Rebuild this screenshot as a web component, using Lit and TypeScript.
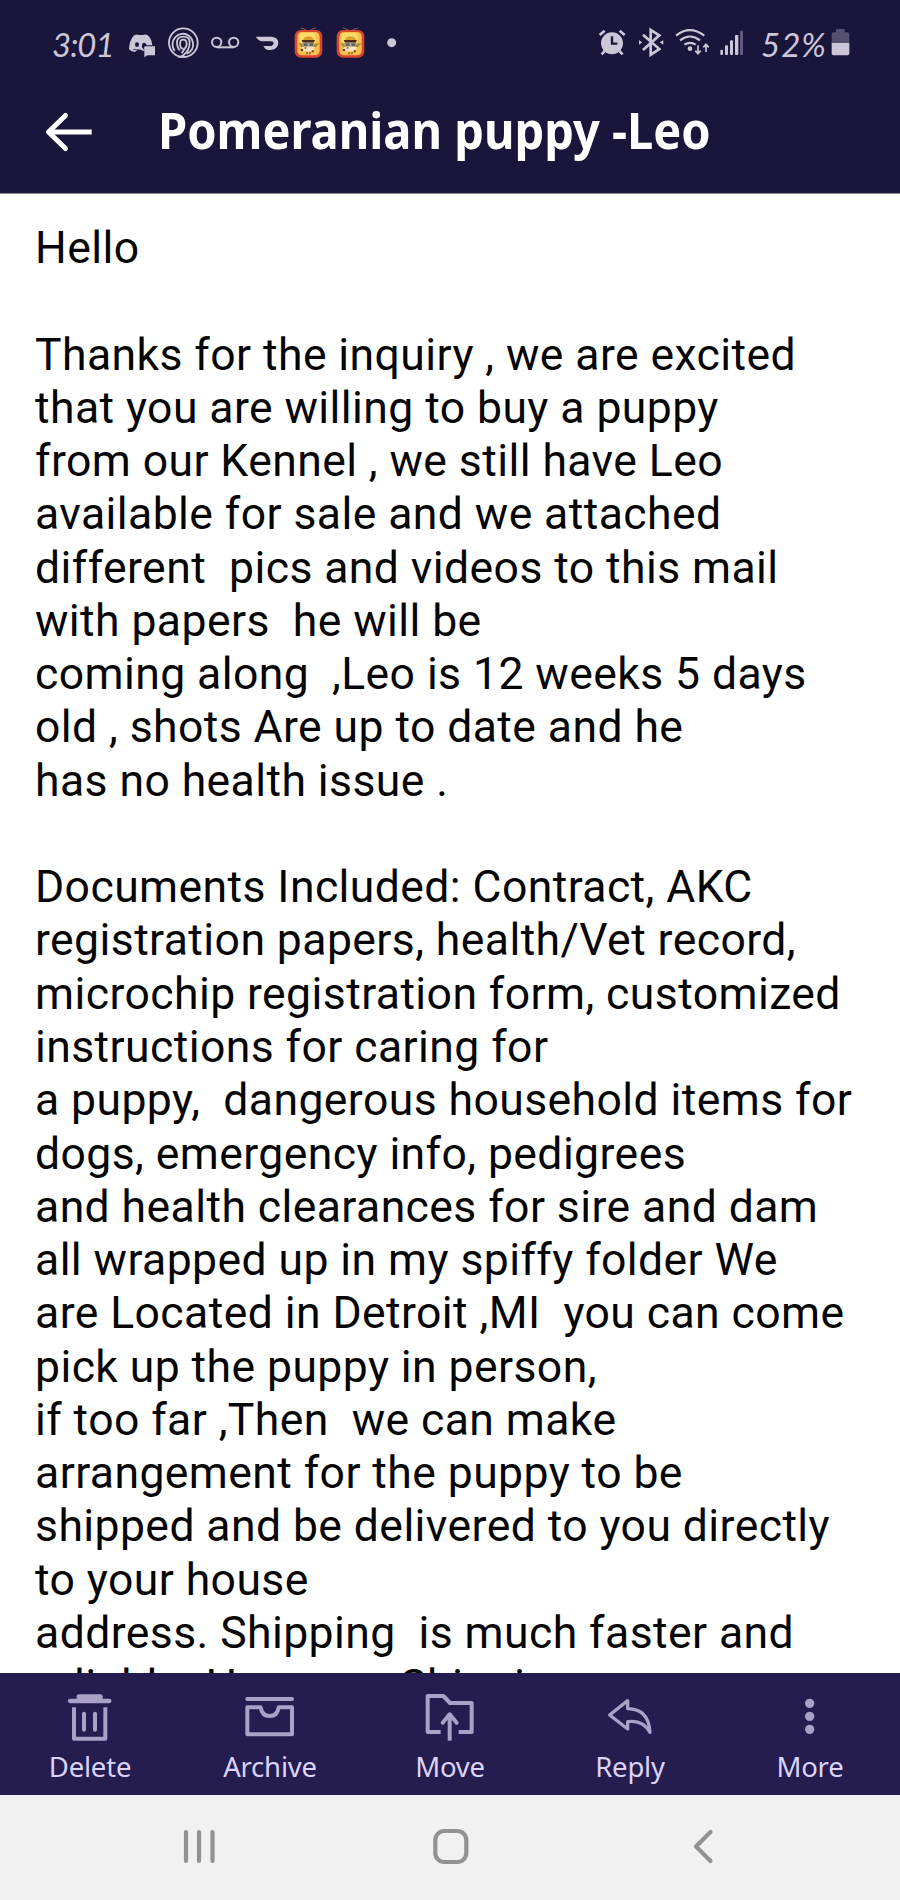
import { LitElement, html, svg, css } from "lit";
import { customElement } from "lit/decorators.js";

const LINES = [
  "Hello", "",
  "Thanks for the inquiry , we are excited",
  "that you are willing to buy a puppy",
  "from our Kennel , we still have Leo",
  "available for sale and we attached",
  "different  pics and videos to this mail",
  "with papers  he will be",
  "coming along  ,Leo is 12 weeks 5 days",
  "old , shots Are up to date and he",
  "has no health issue .", "",
  "Documents Included: Contract, AKC",
  "registration papers, health/Vet record,",
  "microchip registration form, customized",
  "instructions for caring for",
  "a puppy,  dangerous household items for",
  "dogs, emergency info, pedigrees",
  "and health clearances for sire and dam",
  "all wrapped up in my spiffy folder We",
  "are Located in Detroit ,MI  you can come",
  "pick up the puppy in person,",
  "if too far ,Then  we can make",
  "arrangement for the puppy to be",
  "shipped and be delivered to you directly",
  "to your house",
  "address. Shipping  is much faster and",
  "reliable. However, Shipping",
];

// Status glyphs are drawn on a grid of three units per pixel.
const glyph = (x: number, w: number, body: unknown) =>
  html`<svg width=${w / 3} height="40" viewBox="${x} 42 ${w} 120">${body}</svg>`;

const appBadge = svg`
  <path d="M812 54l16 5M858 54l-16 5" stroke="#8b5a58" stroke-width="3"/>
  <rect x="794" y="60" width="83" height="83" rx="19" fill="#d8452f"/>
  <rect x="802" y="66" width="67" height="70" rx="14" fill="#fbc04e"/>
  <rect x="809" y="69" width="48" height="30" rx="10" fill="#ffdc6a"/>
  <path d="M804 99l14 2 4 9-8 2zM868 99l-14 2-4 9 8 2z" fill="#a88a35"/>
  <path d="M818 94q2-15 17-15t18 15z" fill="#d9a32a"/>
  <path d="M815 90h40l-4 8h-32z" fill="#4b2a1c"/>
  <path d="M818 98h34v12h-34z" fill="#b9b09c"/>
  <path d="M821 100h12v8h-12zM838 100h12v8h-12z" fill="#5f666c"/>
  <path d="M815 111h40l-7 13h-26z" fill="#fbe5c4"/>
  <path d="M812 117h7v6h-7zM824 112h5v4h-5zM845 121h6v6h-6zM829 127h4v6h-4zM838 127h4v6h-4z" fill="#7a3a22"/>`;

const ACTIONS = [
  { label: "Delete", icon: svg`<path d="M230 328V319Q230 313 236 313H302Q308 313 308 319V328Z" fill="#a9a1c8" stroke="none"/><path d="M210 333H328" stroke-width="13"/><path d="M222 352V446H316V352" stroke-linecap="butt"/><path d="M252 371V419M285 371V419"/>`, x: 189 },
  { label: "Archive", icon: svg`<path d="M742 327H876"/><path d="M742 352H782Q786 378 809 378T836 352H876V433H742Z"/>`, x: 729 },
  { label: "Move", icon: svg`<path d="M1322 426H1283V318H1330L1350 339H1415V426H1376" stroke-linecap="butt"/><path d="M1349 452V370" stroke-linecap="butt"/><path d="M1328 398L1349 373L1370 398"/>`, x: 1269 },
  { label: "Reply", icon: svg`<path d="M1883 332L1829 375L1883 417V395Q1928 388 1950 427Q1946 357 1883 356Z" stroke-width="10"/>`, x: 1809 },
  { label: "More", icon: svg`<g fill="#a9a1c8" stroke="none"><circle cx="2429" cy="340" r="14"/><circle cx="2429" cy="379" r="14"/><circle cx="2429" cy="418" r="14"/></g>`, x: 2349 },
];

@customElement("app-root")
export class AppRoot extends LitElement {
  static styles = css`
    :host { display: flex; flex-direction: column; width: 900px; height: 1900px; overflow: hidden; background: #fff; }
    svg { display: block; flex: none; overflow: visible; }
    .top { flex: none; height: 194px; background: #1a153b; border-bottom: 1px solid #8f8b9d; box-sizing: border-box; }
    .status { display: flex; height: 64px; padding: 24px 50px 0 52px; box-sizing: border-box; color: #cbc6d8; justify-content: space-between; }
    .group { display: flex; height: 40px; }
    .hand { font: italic 400 33px/40px Lato, sans-serif; white-space: nowrap; }
    .time { width: 77px; letter-spacing: -1px; }
    .pct { width: 70px; letter-spacing: 1px; }
    .bar { display: flex; align-items: center; padding-left: 44px; height: 132px; }
    .bar svg { margin-right: 66px; margin-top: 4px; }
    .title { margin: 0; font: 700 50px/68px "Noto Sans", sans-serif; color: #fff; white-space: nowrap; transform-origin: left; transform: scaleX(.94); }
    .mail { flex: 1; min-height: 0; overflow: hidden; padding: 28px 0 0 35px; }
    .line { height: 53.27px; font: 400 44.5px/53.27px Roboto, sans-serif; color: #050505; white-space: pre; letter-spacing: .42px; }
    .actions { flex: none; display: grid; grid-template-columns: repeat(5, 1fr); height: 122px; background: #251c50; }
    .action { display: flex; flex-direction: column; align-items: center; padding-top: 17px; }
    .label { font: 400 27.5px/34px "Noto Sans", sans-serif; color: #dcd3f8; margin-top: 6px; letter-spacing: -.2px; }
    .nav { flex: none; display: flex; height: 105px; background: #f1f1f1; }
  `;

  render() {
    return html`
      <header class="top">
        <div class="status">
          <div class="group">
            <span class="hand time">3:01</span>
            ${glyph(297, 114, svg`<path d="M311 77Q321 71 326 75H339Q350 71 358 80Q367 93 367 106H343V124L332 119H324L314 126Q302 125 297 118Q298 91 311 77Z" fill="#cbc6d8"/><ellipse cx="321" cy="104" rx="6" ry="7" fill="#1a153b"/><path d="M336 112V105Q337 97 344 98L349 103V108H342V119ZM307 117Q318 124 332 119" fill="#1a153b"/><path d="M346 109H375V136H352L343 142V112Z" fill="#cbc6d8"/>`)}
            ${glyph(411, 132, svg`<g fill="none" stroke="#cbc6d8" stroke-width="5.5"><circle cx="460" cy="98" r="43"/><path d="M434 123A31 32 0 1 1 486 118Q480 128 470 131"/><path d="M450 121Q441 113 441 98Q441 80 460 80T479 98Q479 119 461 135Q453 143 444 139"/><path d="M460 116Q450 116 450 102Q450 89 460 89T470 102Q470 110 464 116L455 130"/></g>`)}
            ${glyph(543, 132, svg`<g fill="none" stroke="#cbc6d8" stroke-width="6"><circle cx="560" cy="97" r="14"/><circle cx="611" cy="97" r="14"/><path d="M560 112H611"/></g>`)}
            ${glyph(675, 117, svg`<path d="M677 80H725Q745 82 745 99Q744 117 723 120H713Q705 118 700 108H724Q731 105 731 99Q730 94 724 94H694Q683 90 677 80Z" fill="#cbc6d8"/>`)}
            ${glyph(792, 126, appBadge)}
            ${glyph(792, 126, appBadge)}
            ${glyph(1044, 60, svg`<circle cx="1085" cy="98" r="13.5" fill="#cbc6d8"/>`)}
          </div>
          <div class="group">
            ${glyph(55, 120, svg`<g fill="none" stroke="#cbc6d8" stroke-width="8"><path d="M60 75L75 62M135 75L120 62"/><path d="M75 123L66 133M119 123L129 133"/></g><circle cx="97" cy="100" r="33" fill="#cbc6d8"/><path d="M97 79V101H113" fill="none" stroke="#1a153b" stroke-width="7"/>`)}
            ${glyph(175, 111, svg`<g fill="none" stroke="#cbc6d8" stroke-width="8"><path d="M190 74L239 117L213 134V60L239 76L190 120"/></g><path d="M178 91L188 97L178 104ZM251 91L240 97L251 104Z" fill="#cbc6d8"/>`)}
            ${glyph(286, 133, svg`<g fill="none" stroke="#cbc6d8" stroke-width="6.5"><path d="M289 77Q330 44 374 77M301 91Q331 68 361 91M314 104Q331 93 348 104"/><path d="M355 106V131M347 122L355 131L363 122M379 126V103M371 112L379 103L387 112" stroke-width="5"/></g><circle cx="331" cy="116" r="7" fill="#cbc6d8"/>`)}
            ${glyph(419, 124, svg`<g fill="#cbc6d8"><rect x="420" y="119" width="8" height="16" rx="3"/><rect x="434" y="106" width="9" height="29" rx="3"/><rect x="449" y="91" width="9" height="44" rx="3"/><rect x="464" y="75" width="10" height="60" rx="3"/></g><rect x="479" y="62" width="9" height="73" rx="3" fill="#625b7d"/>`)}
            <span class="hand pct">52%</span>
            ${glyph(753, 57, svg`<path d="M755 99V74Q755 67 762 67H768V60Q768 57 771 57H791Q794 57 794 60V67H801Q808 67 808 74V99Z" fill="#565070"/><path d="M755 99H808V130Q808 136 802 136H761Q755 136 755 130Z" fill="#cbc6d8"/>`)}
          </div>
        </div>
        <div class="bar">
          <svg width="48" height="40" viewBox="0 0 48 40"><path d="M21.500 3.500L4.500 20L21.500 36.500" fill="none" stroke="#fff" stroke-width="5" stroke-linecap="round" stroke-linejoin="round"/><path d="M4.500 20H47.700" stroke="#fff" stroke-width="5"/></svg>
          <h1 class="title">Pomeranian puppy -Leo</h1>
        </div>
      </header>
      <main class="mail">${LINES.map((l) => html`<div class="line">${l}</div>`)}</main>
      <div class="actions">
        ${ACTIONS.map((a) => html`<div class="action">
          <svg width="54" height="54" viewBox="${a.x} 300 162 162" fill="none" stroke="#a9a1c8" stroke-width="12" stroke-linecap="round" stroke-linejoin="round">${a.icon}</svg>
          <span class="label">${a.label}</span>
        </div>`)}
      </div>
      <nav class="nav">
        <svg width="900" height="105" viewBox="0 1795 900 105" fill="none" stroke="#929292" stroke-width="4.2" stroke-linecap="round" stroke-linejoin="round">
          <path d="M186 1832V1861M199 1832V1861M212.500 1832V1861"/>
          <rect x="435.300" y="1831" width="31" height="31" rx="9"/>
          <path d="M710.500 1832L696 1846.500L710.500 1861"/>
        </svg>
      </nav>`;
  }
}
